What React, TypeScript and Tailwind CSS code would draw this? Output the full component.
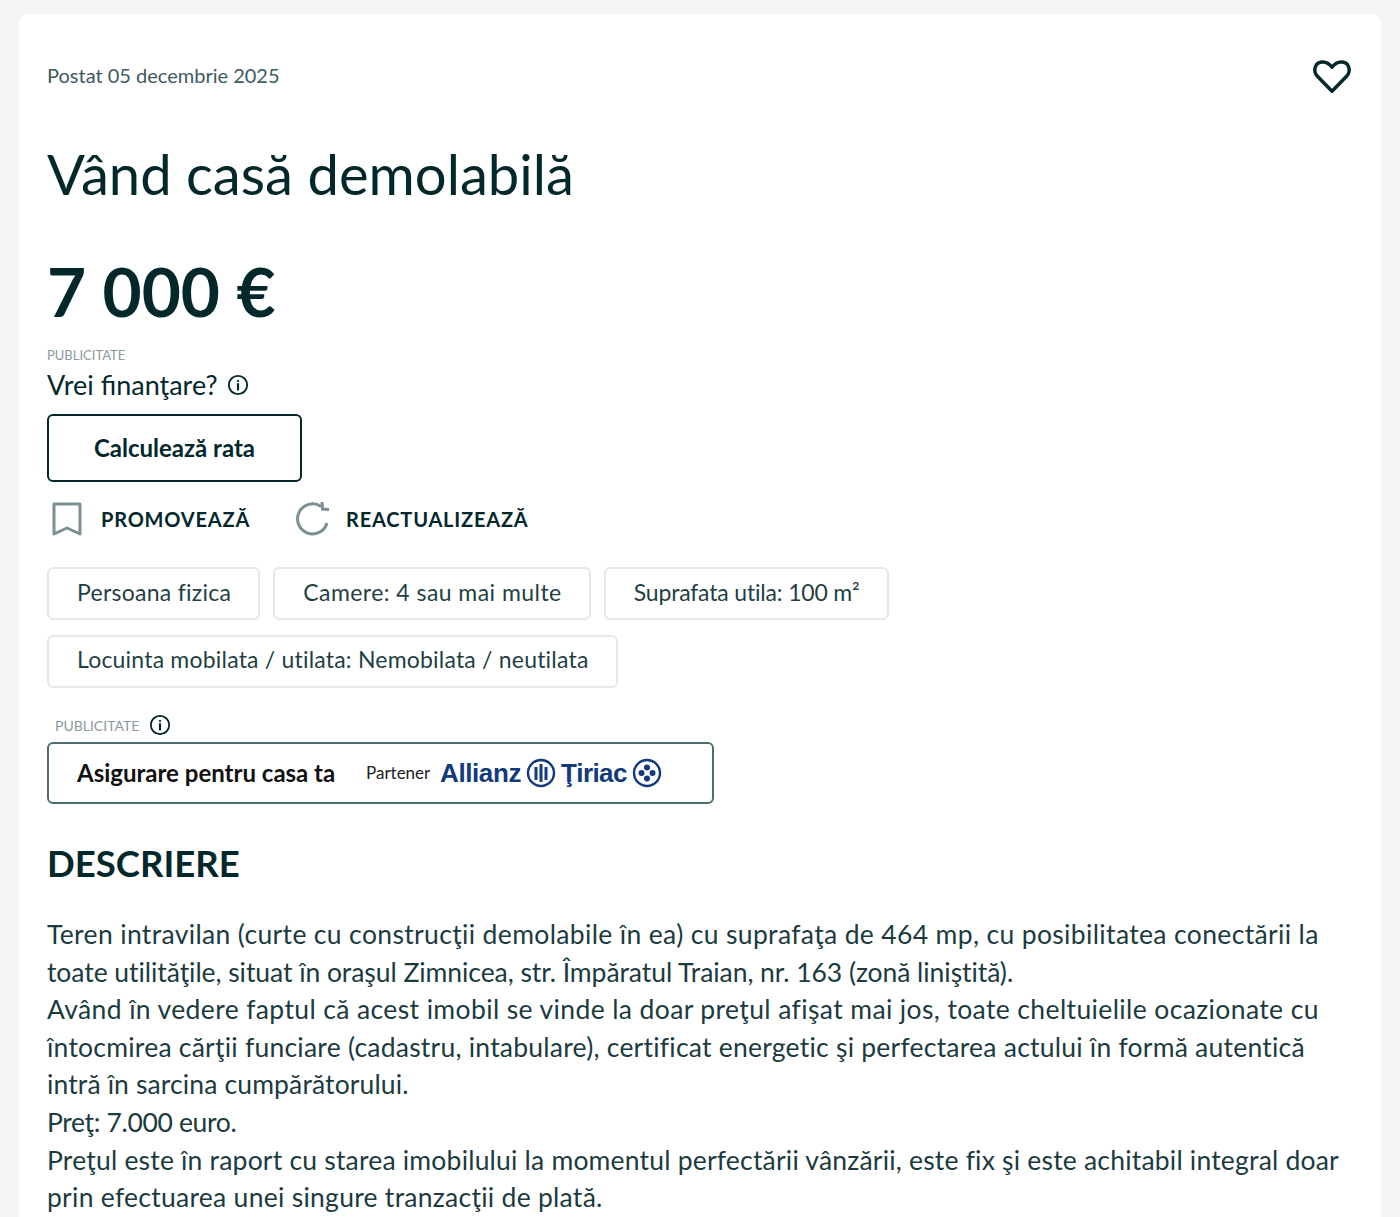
import React from "react";

const Info = ({ size }: { size: number }) => (
  <svg width={size} height={size} viewBox="0 0 24 24" fill="none" stroke="#02282c" strokeWidth="2" strokeLinecap="round">
    <circle cx="12" cy="12" r="10" />
    <path d="M12 11v6" strokeWidth="2.4" />
    <circle cx="12" cy="7.5" r="1.2" fill="#02282c" stroke="none" />
  </svg>
);

const Chip = ({ children, className }: { children: React.ReactNode; className: string }) => (
  <div className={"h-[53px] pl-[28px] pr-[27px] flex items-center border-2 border-[#e4e8e9] rounded-[6px] text-[23px] text-[#1f3f43] whitespace-nowrap " + className}>
    {children}
  </div>
);

export default function App() {
  return (
    <div className="w-[1400px] h-[1217px] overflow-hidden bg-[#f2f4f5] pt-[14px] px-[19px] font-['Lato','Liberation_Sans',sans-serif] text-[#02282c]">
      <div className="bg-white rounded-t-[10px] h-[1300px] px-[28px]">
        <div className="flex items-start justify-between pt-[37px]">
          <span className="text-[20px] leading-[48px] h-[48px] text-[#3d5a5e]">Postat 05 decembrie 2025</span>
          <svg className="mr-[-2px]" width="46" height="48" viewBox="0 0 48 48" fill="none" stroke="#02282c" strokeWidth="3.6" strokeLinejoin="round">
            <path d="M24 41 L8.5 25 C4 20 6 11.5 13 10.5 C18 9.8 21.5 12.5 24 16 C26.5 12.5 30 9.8 35 10.5 C42 11.5 44 20 39.5 25 Z" />
          </svg>
        </div>
        <h1 className="mt-[39px] text-[56.2px] leading-[72px] text-[#02282c] font-normal">Vând casă demolabilă</h1>
        <div className="mt-[41px] text-[67.5px] leading-[80px] font-bold">7 000 €</div>
        <div className="mt-[17px] text-[13px] leading-[14px] text-[#8a9a9d]">PUBLICITATE</div>
        <div className="mt-[6px] flex items-center gap-[9px] text-[27px] leading-[34px]">
          Vrei finanţare? <Info size={22} />
        </div>
        <button className="mt-[12px] block w-[255px] h-[68px] border-[2.5px] border-[#02282c] rounded-[6px] text-[24px] font-bold text-[#02282c]">
          Calculează rata
        </button>
        <div className="mt-[19px] h-[36px] flex items-center">
          <svg className="ml-[4px]" width="32" height="36" viewBox="0 0 32 36" fill="none" stroke="#7b9093" strokeWidth="3">
            <path d="M3 3 H29 V33 L16 27 L3 33 Z" strokeLinejoin="round" />
          </svg>
          <span className="ml-[18px] text-[20px] font-bold tracking-[0.8px]">PROMOVEAZĂ</span>
          <svg className="ml-[45px]" width="36" height="36" viewBox="0 0 36 36" fill="none" stroke="#7b9093" strokeWidth="3">
            <path d="M32 22 A15 15 0 1 1 26 5.5" />
            <path d="M27 1 L27.5 8 L34 8.5" strokeWidth="3" />
          </svg>
          <span className="ml-[15px] text-[20px] font-bold tracking-[0.8px]">REACTUALIZEAZĂ</span>
        </div>
        <div className="mt-[30px] flex gap-[13px]">
          <Chip className="pb-[2px] tracking-[0.27px]">Persoana fizica</Chip>
          <Chip className="pb-[2px] tracking-[0.45px]">Camere: 4 sau mai multe</Chip>
          <Chip className="pb-[2px] tracking-[-0.17px]">Suprafata utila: 100 m²</Chip>
        </div>
        <div className="mt-[15px] flex">
          <Chip className="pb-[5px] tracking-[0.2px]">Locuinta mobilata / utilata: Nemobilata / neutilata</Chip>
        </div>
        <div className="mt-[26px] pl-[8px] flex items-center gap-[10px] h-[22px]">
          <span className="text-[14px] text-[#8a9a9d]">PUBLICITATE</span>
          <Info size={22} />
        </div>
        <div className="mt-[6px] w-[667px] h-[62px] border-2 border-[#4f6d70] rounded-[6px] pl-[28px] flex items-center">
          <span className="text-[24px] font-bold text-[#111] w-[289px] whitespace-nowrap">Asigurare pentru casa ta</span>
          <span className="text-[17px] text-[#222] w-[74px]">Partener</span>
          <span className="font-['Liberation_Sans',sans-serif] text-[26px] font-bold text-[#123a7c] tracking-[-0.4px]">Allianz</span>
          <svg className="ml-[5px]" width="30" height="30" viewBox="0 0 30 30" fill="none" stroke="#123a7c" strokeWidth="2.4">
            <circle cx="15" cy="15" r="13" />
            <path d="M15 6 V24 M10 9 V22 M20 9 V22" strokeWidth="3" />
          </svg>
          <span className="ml-[5px] font-['Liberation_Sans',sans-serif] text-[26px] font-bold text-[#123a7c] tracking-[-0.6px]">Ţiriac</span>
          <svg className="ml-[5px]" width="30" height="30" viewBox="0 0 30 30" fill="none" stroke="#123a7c" strokeWidth="2.4">
            <circle cx="15" cy="15" r="13" />
            <circle cx="15" cy="9.5" r="3" fill="#123a7c" stroke="none" />
            <circle cx="15" cy="20.5" r="3" fill="#123a7c" stroke="none" />
            <circle cx="9.5" cy="15" r="3" fill="#123a7c" stroke="none" />
            <circle cx="20.5" cy="15" r="3" fill="#123a7c" stroke="none" />
          </svg>
        </div>
        <h2 className="mt-[35px] text-[36.5px] leading-[48px] font-bold">DESCRIERE</h2>
        <div className="mt-[29px] text-[26.5px] leading-[37.6px] text-[#1b3b3f] whitespace-nowrap">
          <p className="tracking-[0.35px]">Teren intravilan (curte cu construcţii demolabile în ea) cu suprafaţa de 464 mp, cu posibilitatea conectării la</p>
          <p className="tracking-[-0.06px]">toate utilităţile, situat în oraşul Zimnicea, str. Împăratul Traian, nr. 163 (zonă liniştită).</p>
          <p className="tracking-[0.38px]">Având în vedere faptul că acest imobil se vinde la doar preţul afişat mai jos, toate cheltuielile ocazionate cu</p>
          <p className="tracking-[0.23px]">întocmirea cărţii funciare (cadastru, intabulare), certificat energetic şi perfectarea actului în formă autentică</p>
          <p className="tracking-[0.13px]">intră în sarcina cumpărătorului.</p>
          <p className="tracking-[-0.35px]">Preţ: 7.000 euro.</p>
          <p className="tracking-[0.2px]">Preţul este în raport cu starea imobilului la momentul perfectării vânzării, este fix şi este achitabil integral doar</p>
          <p className="tracking-[0.27px]">prin efectuarea unei singure tranzacţii de plată.</p>
        </div>
      </div>
    </div>
  );
}
